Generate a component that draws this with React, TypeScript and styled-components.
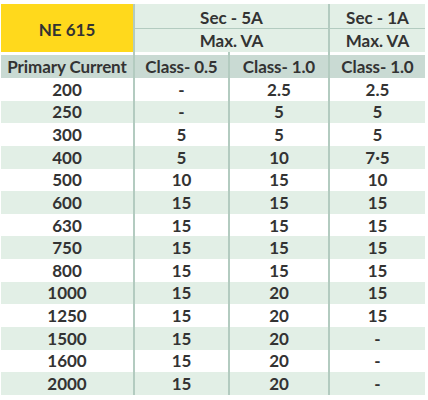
import styled, { createGlobalStyle } from "styled-components";

const GlobalStyle = createGlobalStyle`
    html, body {
        margin: 0;
        padding: 0;
        background: #ffffff;
    }
    body {
        font-family: Lato, "Liberation Sans", sans-serif;
    }
`;

const lineColor = "#b3cbc0";
const greenBg = "#e2efe6";

const Page = styled.div`
    padding: 4px 3px 0 1px;
`;

const Table = styled.div`
    display: grid;
    width: 424px;
    grid-template-columns: 132px 95px 100px 97px;
    grid-template-rows: 25px 23px 26px repeat(14, 22.64px);
    color: #333333;
    font-weight: 700;
    font-size: 17px;
`;

const Cell = styled.div<{ $line?: boolean }>`
    display: flex;
    align-items: center;
    justify-content: center;
    border-left: ${props => (props.$line ? `2px solid ${lineColor}` : "none")};
    white-space: nowrap;
`;

const TitleCell = styled(Cell)`
    grid-row: 1 / 3;
    grid-column: 1;
    background: #ffd91c;
    font-size: 17px;
    padding-top: 2px;
`;

const GroupCell = styled(Cell)<{ $span?: number; $top?: boolean }>`
    grid-column: span ${props => props.$span ?? 1};
    background: ${greenBg};
    border-bottom: ${props => (props.$top ? `1px solid ${lineColor}` : "none")};
    padding-top: ${props => (props.$top ? "2px" : "0")};
`;

const HeadCell = styled(Cell)`
    padding-top: 3px;
    background: #c9dad3;
    background-clip: content-box;
    letter-spacing: -0.1px;
`;

const DataCell = styled(Cell)<{ $shade: boolean }>`
    background: ${props => (props.$shade ? greenBg : "#ffffff")};
`;

const rows: string[][] = [
    ["200", "-", "2.5", "2.5"],
    ["250", "-", "5", "5"],
    ["300", "5", "5", "5"],
    ["400", "5", "10", "7·5"],
    ["500", "10", "15", "10"],
    ["600", "15", "15", "15"],
    ["630", "15", "15", "15"],
    ["750", "15", "15", "15"],
    ["800", "15", "15", "15"],
    ["1000", "15", "20", "15"],
    ["1250", "15", "20", "15"],
    ["1500", "15", "20", "-"],
    ["1600", "15", "20", "-"],
    ["2000", "15", "20", "-"]
];

const App = () => {
    return (
        <Page>
            <GlobalStyle />
            <Table>
                <TitleCell>NE 615</TitleCell>
                <GroupCell $line $top $span={2}>Sec - 5A</GroupCell>
                <GroupCell $line $top>Sec - 1A</GroupCell>
                <GroupCell $line $span={2}>Max. VA</GroupCell>
                <GroupCell $line>Max. VA</GroupCell>

                <HeadCell>Primary Current</HeadCell>
                <HeadCell $line>Class- 0.5</HeadCell>
                <HeadCell $line>Class- 1.0</HeadCell>
                <HeadCell $line>Class- 1.0</HeadCell>

                {rows.map((row, i) =>
                    row.map((value, j) => (
                        <DataCell key={`${i}-${j}`} $line={j > 0} $shade={i % 2 === 1}>
                            {value}
                        </DataCell>
                    ))
                )}
            </Table>
        </Page>
    );
};

export default App;
